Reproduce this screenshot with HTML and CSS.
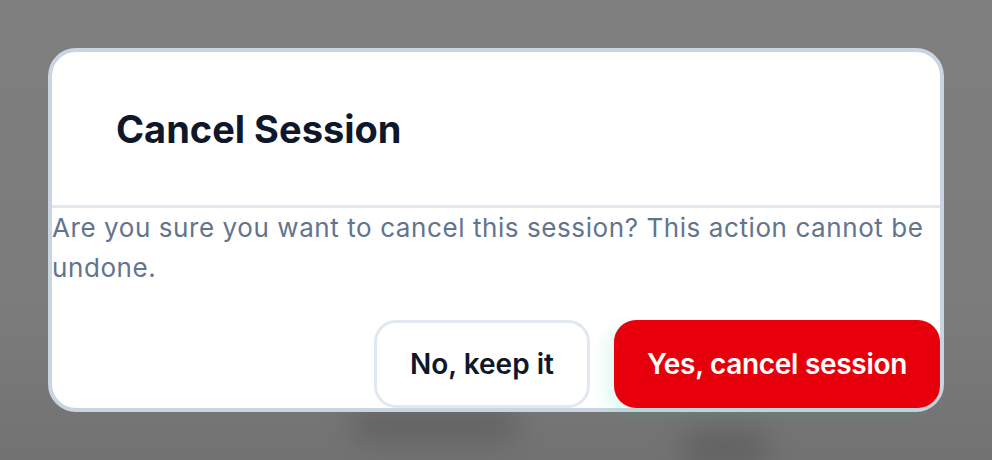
FILE: index.html
```html
<!DOCTYPE html>
<html lang="en">
<head>
<meta charset="utf-8">
<title>Cancel Session</title>
<link rel="stylesheet" href="styles.css">
</head>
<body>
<div class="backdrop" aria-hidden="true">
  <div class="blob blob-a"></div>
  <div class="blob blob-b"></div>
</div>
<div class="modal" role="dialog" aria-labelledby="modal-title">
  <div class="modal-header">
    <h2 class="modal-title" id="modal-title">Cancel Session</h2>
  </div>
  <p class="modal-text">Are you sure you want to cancel this session? This action cannot be undone.</p>
  <div class="modal-actions">
    <button class="btn btn-secondary" type="button">No, keep it</button>
    <button class="btn btn-danger" type="button">Yes, cancel session</button>
  </div>
</div>
</body>
</html>
```
FILE: styles.css
```css
* { box-sizing: border-box; }

html, body {
  margin: 0;
  height: 100%;
}

body {
  background: #7c7c7c;
  font-family: Inter, "Noto Sans", "Liberation Sans", sans-serif;
  display: flex;
  align-items: center;
  justify-content: center;
  overflow: hidden;
  position: relative;
}

.backdrop {
  position: absolute;
  inset: 0;
  background: linear-gradient(180deg, #7f7f7f 0%, #7b7b7b 70%, #727272 100%);
}

.blob {
  position: absolute;
  background: #555;
  border-radius: 20px;
  filter: blur(14px);
  opacity: 0.55;
}

.blob-a {
  left: 350px;
  top: 408px;
  width: 170px;
  height: 34px;
}

.blob-b {
  left: 680px;
  top: 428px;
  width: 90px;
  height: 40px;
}

.modal {
  position: relative;
  width: 896px;
  background: #ffffff;
  border: 4px solid #cad5e2;
  border-radius: 28px;
  display: flex;
  flex-direction: column;
}

.modal-header {
  padding: 54px 64px 53px;
  border-bottom: 3px solid #e2e8f0;
}

.modal-title {
  margin: 0;
  font-size: 38px;
  line-height: 46px;
  font-weight: 700;
  color: #0f172b;
}

.modal-text {
  margin: 0;
  font-size: 26px;
  line-height: 40px;
  letter-spacing: 0.58px;
  color: #62748e;
}

.modal-actions {
  margin-top: 32px;
  display: flex;
  justify-content: flex-end;
  gap: 24px;
}

.btn {
  height: 88px;
  padding: 0 33px;
  border-radius: 22px;
  border: 3px solid transparent;
  font-family: Inter, "Noto Sans", "Liberation Sans", sans-serif;
  font-size: 28px;
  font-weight: 600;
  cursor: pointer;
}

.btn-secondary {
  background: #ffffff;
  border-color: #e2e8f0;
  color: #0f172b;
}

.btn-danger {
  background: #e7000b;
  border: 0;
  padding: 0 33px;
  letter-spacing: -0.3px;
  color: #ffffff;
  box-shadow: -10px 6px 14px rgba(52, 211, 153, 0.12);
}
```
